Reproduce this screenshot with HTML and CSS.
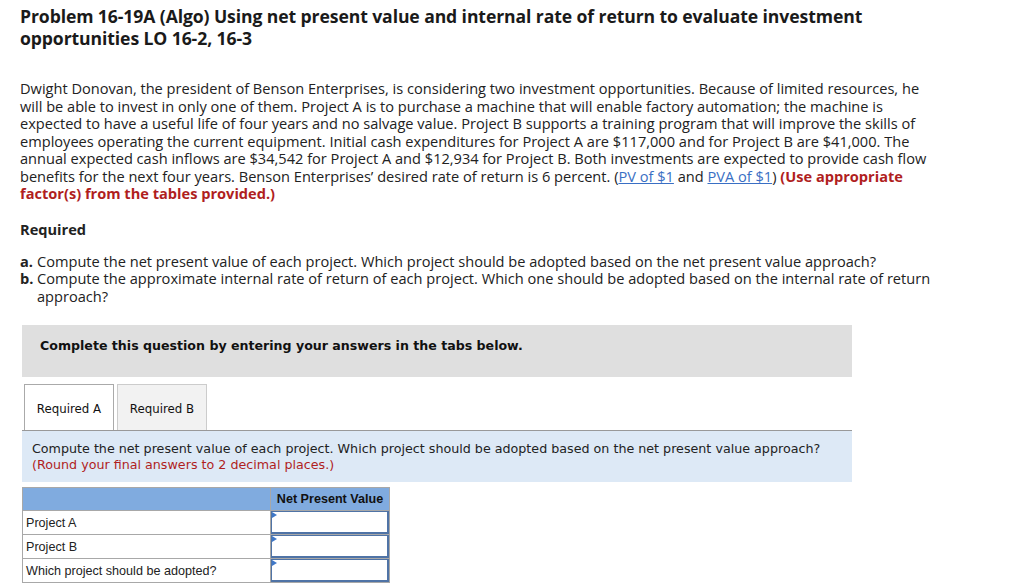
FILE: index.html
```html
<!DOCTYPE html>
<html>
<head>
<meta charset="utf-8">
<link rel="stylesheet" href="styles.css">
</head>
<body>
<div class="page">
  <h1 class="title">Problem 16-19A (Algo) Using net present value and internal rate of return to evaluate investment opportunities LO 16-2, 16-3</h1>
  <p class="intro">Dwight Donovan, the president of Benson Enterprises, is considering two investment opportunities. Because of limited resources, he will be able to invest in only one of them. Project A is to purchase a machine that will enable factory automation; the machine is expected to have a useful life of four years and no salvage value. Project B supports a training program that will improve the skills of employees operating the current equipment. Initial cash expenditures for Project A are $117,000 and for Project B are $41,000. The annual expected cash inflows are $34,542 for Project A and $12,934 for Project B. Both investments are expected to provide cash flow benefits for the next four years. Benson Enterprises’ desired rate of return is 6 percent. (<a class="link" href="#">PV of $1</a> and <a class="link" href="#">PVA of $1</a>) <strong class="warn">(Use appropriate factor(s) from the tables provided.)</strong></p>
  <h2 class="req">Required</h2>
  <ol class="parts">
    <li><b>a.</b><span>Compute the net present value of each project. Which project should be adopted based on the net present value approach?</span></li>
    <li><b>b.</b><span>Compute the approximate internal rate of return of each project. Which one should be adopted based on the internal rate of return approach?</span></li>
  </ol>
  <div class="notice">Complete this question by entering your answers in the tabs below.</div>
  <div class="tabs">
    <div class="tab active">Required A</div>
    <div class="tab">Required B</div>
  </div>
  <div class="instr">
    <div>Compute the net present value of each project. Which project should be adopted based on the net present value approach?</div>
    <div class="round">(Round your final answers to 2 decimal places.)</div>
  </div>
  <table class="grid">
    <tr class="head"><th class="lbl"></th><th class="val">Net Present Value</th></tr>
    <tr><td class="lbl">Project A</td><td class="inp"><div class="box"></div></td></tr>
    <tr><td class="lbl">Project B</td><td class="inp"><div class="box"></div></td></tr>
    <tr><td class="lbl">Which project should be adopted?</td><td class="inp"><div class="box"></div></td></tr>
  </table>
</div>
</body>
</html>
```
FILE: styles.css
```css
html, body { margin: 0; padding: 0; background: #fff; }
body { font-family: "Open Sans", "Liberation Sans", sans-serif; color: #222; }
.page { padding: 5px 0 0 20px; width: 940px; }
.title { font-size: 17.6px; font-weight: bold; line-height: 22px; margin: 0; color: #1a1a1a; width: 880px; letter-spacing: -0.1px; }
.intro { font-size: 14.6px; line-height: 17.5px; margin: 31px 0 0 0; width: 918px; color: #222; }
.link { color: #3a6fc4; text-decoration: underline; }
.warn { color: #b01e1e; font-weight: bold; }
.req { font-size: 14.6px; font-weight: bold; margin: 17px 0 0 0; line-height: 18px; }
.parts { list-style: none; margin: 15px 0 0 0; padding: 0; font-size: 14.6px; line-height: 17.5px; width: 918px; }
.parts li { display: flex; }
.parts b { width: 17px; flex: none; }
.notice { margin: 20px 0 0 2px; width: 830px; height: 52px; box-sizing: border-box; background: #dfdfdf; padding: 13px 18px; font-family: "DejaVu Sans", Verdana, sans-serif; font-weight: bold; font-size: 12.6px; color: #111; }
.tabs { display: flex; gap: 3px; margin: 7px 0 0 4px; height: 46px; }
.tab { width: 90px; box-sizing: border-box; border: 1px solid #ccc; border-bottom: none; background: #f2f2f2; font-family: "DejaVu Sans", Verdana, sans-serif; font-size: 11.8px; display: flex; align-items: center; justify-content: center; color: #111; padding-top: 2px; }
.tab.active { background: #fff; border-color: #aaa; }
.instr { margin-left: 2px; width: 830px; height: 52px; box-sizing: border-box; background: #dde9f6; border-top: 1px solid #999; padding: 10px 10px; font-family: "DejaVu Sans", Verdana, sans-serif; font-size: 12.7px; line-height: 16px; color: #222; }
.round { color: #b01e1e; }
.grid { margin: 5px 0 0 2px; border-collapse: collapse; font-family: "Liberation Sans", Arial, sans-serif; font-size: 12.6px; }
.grid td, .grid th { border: 1px solid #a8a8a8; padding: 0; height: 22px; }
.grid td { height: 22px; }
.grid tr + tr td { height: 23px; }
.head th { background: #80abdf; }
.grid .lbl { width: 244px; text-align: left; padding-left: 3px; }
.grid .val { width: 118px; font-weight: bold; color: #111; }
.inp { position: relative; }
.box { height: 23px; border: 2px solid #4f73a6; border-width: 1px 2px 2px 1px; box-sizing: border-box; background: #fff; margin: 0; }
.inp::before { content: ""; position: absolute; left: 1px; top: 1px; border-left: 5px solid #3f78c8; border-top: 3px solid transparent; border-bottom: 3px solid transparent; }
```
